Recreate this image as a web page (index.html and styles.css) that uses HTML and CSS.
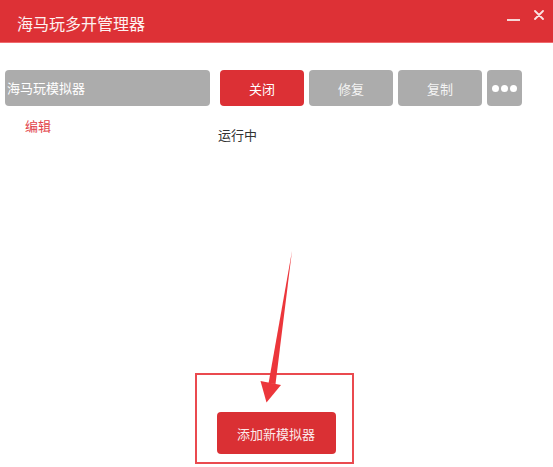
FILE: index.html
```html
<!DOCTYPE html>
<html lang="zh-CN">
<head>
<meta charset="utf-8">
<title>海马玩多开管理器</title>
<link rel="stylesheet" href="styles.css">
</head>
<body>
<div class="window">
  <header class="titlebar">
    <div class="title">海马玩多开管理器</div>
    <div class="controls">
      <span class="minimize"></span>
      <svg class="close-x" width="10" height="10" viewBox="0 0 10 10"><path d="M1 1 L9 9 M9 1 L1 9" stroke="#fbe3e3" stroke-width="1.8" stroke-linecap="round"/></svg>
    </div>
  </header>
  <main class="content">
    <div class="row">
      <div class="name-field">海马玩模拟器</div>
      <button class="btn btn-red">关闭</button>
      <button class="btn btn-gray">修复</button>
      <button class="btn btn-gray">复制</button>
      <button class="btn btn-more"><span class="dot"></span><span class="dot"></span><span class="dot"></span></button>
    </div>
    <div class="row2">
      <a class="edit">编辑</a>
      <span class="status">运行中</span>
    </div>
  </main>
  <footer class="footer">
    <div class="add-wrap">
      <button class="btn-add">添加新模拟器</button>
      <div class="highlight-box"></div>
    </div>
  </footer>
  <svg class="arrow" width="553" height="467" viewBox="0 0 553 467">
    <polygon points="292,251 275.5,384 268.5,383.5" fill="#ec363b"/>
    <polygon points="260.5,381 281,385 266.5,402.5" fill="#ec363b"/>
  </svg>
</div>
</body>
</html>
```

FILE: styles.css
```css
* { box-sizing: border-box; }
html, body { margin: 0; padding: 0; }
body {
  width: 553px;
  height: 467px;
  overflow: hidden;
  background: #ffffff;
  font-family: "Noto Sans CJK SC", "Noto Sans", sans-serif;
}
.window {
  position: relative;
  width: 553px;
  height: 467px;
  display: flex;
  flex-direction: column;
}
.titlebar {
  height: 43px;
  background: #dd3136;
  border-bottom: 1px solid #f06a6e;
  display: flex;
  align-items: center;
  justify-content: space-between;
  padding: 0 9px 0 17px;
  flex: none;
}
.title {
  color: #fdf1f1;
  font-size: 16px;
  line-height: 20px;
  margin-top: 3px;
}
.controls {
  display: flex;
  align-items: flex-start;
  align-self: stretch;
  gap: 14px;
}
.minimize {
  display: block;
  width: 13px;
  height: 2px;
  background: #f6d6d6;
  margin-top: 19px;
}
.close-x { margin-top: 10px; }
.content {
  flex: 1;
  padding: 27px 0 0 5px;
}
.row {
  display: flex;
  align-items: center;
  height: 36px;
}
.name-field {
  width: 205px;
  height: 36px;
  background: #acacac;
  border-radius: 4px;
  color: #ffffff;
  font-size: 13px;
  line-height: 36px;
  padding-left: 2px;
  margin-right: 10px;
}
.btn {
  border: none;
  font-family: inherit;
  font-size: 13px;
  color: #ffffff;
  height: 36px;
  width: 84px;
  border-radius: 4px;
  margin-right: 5px;
  padding: 0;
}
.btn-red { background: #dc3035; }
.btn-gray { background: #acacac; color: #f4f4f4; }
.btn-more {
  width: 35px;
  background: #acacac;
  display: flex;
  align-items: center;
  justify-content: center;
  gap: 2px;
}
.dot {
  width: 7px;
  height: 7px;
  border-radius: 50%;
  background: #ffffff;
}
.row2 {
  display: flex;
  align-items: flex-start;
  margin-top: 10px;
}
.edit {
  color: #e2434a;
  font-size: 13px;
  line-height: 20px;
  margin-left: 20px;
  width: 193px;
}
.status {
  color: #333333;
  font-size: 13px;
  line-height: 20px;
  margin-top: 9px;
}
.footer {
  flex: none;
  display: flex;
  justify-content: center;
  padding: 0 0 13px 0;
}
.add-wrap {
  position: relative;
  margin-left: -1px;
}
.btn-add {
  display: block;
  width: 119px;
  height: 42px;
  border: none;
  border-radius: 4px;
  background: #da3034;
  color: #fbeaea;
  font-family: inherit;
  font-size: 13px;
  padding: 0;
}
.highlight-box {
  position: absolute;
  left: -22px;
  right: -18px;
  top: -39px;
  bottom: -10px;
  border: 2px solid #ea4a4f;
  pointer-events: none;
}
.arrow {
  position: absolute;
  left: 0;
  top: 0;
  pointer-events: none;
}
```
